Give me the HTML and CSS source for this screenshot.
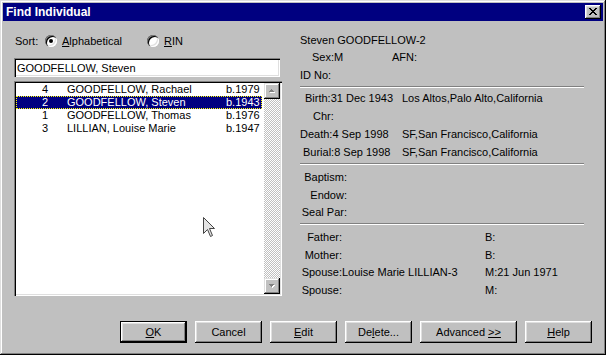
FILE: index.html
```html
<!DOCTYPE html>
<html lang="en">
<head>
    <meta charset="UTF-8">
    <title>Find Individual</title>
    <link rel="stylesheet" href="styles.css">
</head>
<body>
    <div class="window">
        <div class="titlebar">
            <span class="title">Find Individual</span>
            <div class="close-btn">
                <svg width="8" height="7" viewBox="0 0 8 7" shape-rendering="crispEdges">
                    <path fill="#000" d="M0 0h2v1H0z M6 0h2v1H6z M1 1h2v1H1z M5 1h2v1H5z M2 2h4v1H2z M3 3h2v1H3z M2 4h4v1H2z M1 5h2v1H1z M5 5h2v1H5z M0 6h2v1H0z M6 6h2v1H6z"/>
                </svg>
            </div>
        </div>

        <div class="main">
            <div class="search-col">
                <div class="sort-row">
                    <span class="sort-label">Sort:</span>
                    <div class="radio radio-first"><span class="radio-dot checked"></span><span><u>A</u>lphabetical</span></div>
                    <div class="radio"><span class="radio-dot"></span><span><u>R</u>IN</span></div>
                </div>

                <input class="name-input" type="text" value="GOODFELLOW, Steven">

                <div class="listbox">
                    <div class="list-rows">
                        <div class="list-row"><span class="num">4</span><span class="name">GOODFELLOW, Rachael</span><span class="year">b.1979</span></div>
                        <div class="list-row selected"><span class="num">2</span><span class="name">GOODFELLOW, Steven</span><span class="year">b.1943</span></div>
                        <div class="list-row"><span class="num">1</span><span class="name">GOODFELLOW, Thomas</span><span class="year">b.1976</span></div>
                        <div class="list-row"><span class="num">3</span><span class="name">LILLIAN, Louise Marie</span><span class="year">b.1947</span></div>
                    </div>
                    <div class="scrollbar">
                        <div class="scroll-btn">
                            <svg width="6" height="4" viewBox="0 0 6 4" shape-rendering="crispEdges">
                                <path fill="#fff" d="M3 1h1v1H3z M2 2h3v1H2z M1 3h5v1H1z"/>
                                <path fill="#808080" d="M2 0h1v1H2z M1 1h3v1H1z M0 2h5v1H0z"/>
                            </svg>
                        </div>
                        <div class="scroll-track"></div>
                        <div class="scroll-btn">
                            <svg width="6" height="4" viewBox="0 0 6 4" shape-rendering="crispEdges">
                                <path fill="#fff" d="M1 1h5v1H1z M2 2h3v1H2z M3 3h1v1H3z"/>
                                <path fill="#808080" d="M0 0h5v1H0z M1 1h3v1H1z M2 2h1v1H2z"/>
                            </svg>
                        </div>
                    </div>
                    <!-- mouse pointer left over the list -->
                    <svg class="pointer" width="13" height="21" viewBox="0 0 13 21">
                        <path d="M0.5 0.5 L0.5 16.5 L4.5 12.5 L7.5 19.5 L9.5 18.5 L6.5 11.5 L11.5 11.5 Z" fill="#e4e4e4" stroke="#444" stroke-width="1"/>
                    </svg>
                </div>
            </div>

            <div class="details">
                <div class="person-name">Steven GOODFELLOW-2</div>
                <div class="row">
                    <span class="sex">Sex:M</span>
                    <span>AFN:</span>
                </div>
                <div class="row">ID No:</div>

                <div class="sep sep-first"></div>

                <div class="row event">
                    <span class="when ind-birth">Birth:31 Dec 1943</span>
                    <span>Los Altos,Palo Alto,California</span>
                </div>
                <div class="row event">
                    <span class="when ind-chr">Chr:</span>
                    <span></span>
                </div>
                <div class="row event">
                    <span class="when">Death:4 Sep 1998</span>
                    <span>SF,San Francisco,California</span>
                </div>
                <div class="row event">
                    <span class="when ind-burial">Burial:8 Sep 1998</span>
                    <span>SF,San Francisco,California</span>
                </div>

                <div class="sep sep-second"></div>

                <div class="row ord"><span class="ord-label">Baptism:</span></div>
                <div class="row ord"><span class="ord-label">Endow:</span></div>
                <div class="row ord"><span class="ord-label">Seal Par:</span></div>

                <div class="sep sep-third"></div>

                <div class="row family">
                    <span><span class="fam-label">Father:</span></span>
                    <span>B:</span>
                </div>
                <div class="row family">
                    <span><span class="fam-label">Mother:</span></span>
                    <span>B:</span>
                </div>
                <div class="row family">
                    <span><span class="fam-label">Spouse:</span>Louise Marie LILLIAN-3</span>
                    <span>M:21 Jun 1971</span>
                </div>
                <div class="row family">
                    <span><span class="fam-label">Spouse:</span></span>
                    <span>M:</span>
                </div>
            </div>
        </div>

        <div class="buttons">
            <button class="btn btn-default"><u>O</u>K</button>
            <button class="btn">Cancel</button>
            <button class="btn"><u>E</u>dit</button>
            <button class="btn">De<u>l</u>ete...</button>
            <button class="btn btn-wide">Advanced <u>&gt;&gt;</u></button>
            <button class="btn"><u>H</u>elp</button>
        </div>
    </div>
</body>
</html>
```

FILE: styles.css
```css
body {
    margin: 0;
    background-color: #c0c0c0;
    font-family: "Liberation Sans", Arial, sans-serif;
    font-size: 11px;
    color: #000;
}
.window {
    width: 606px;
    height: 355px;
    box-sizing: border-box;
    padding: 3px;
    background: #c0c0c0;
    box-shadow: inset -1px -1px #000, inset 1px 1px #dfdfdf, inset -2px -2px #808080, inset 2px 2px #fff;
    display: flex;
    flex-direction: column;
}
.titlebar {
    height: 18px;
    background: #000080;
    color: #fff;
    display: flex;
    align-items: center;
    justify-content: space-between;
    padding-left: 3px;
}
.title {
    font-weight: bold;
    font-size: 12px;
}
.close-btn {
    width: 16px;
    height: 14px;
    margin-right: 2px;
    background: #c0c0c0;
    box-shadow: inset -1px -1px #000, inset 1px 1px #fff, inset -2px -2px #808080, inset 2px 2px #dfdfdf;
    display: flex;
    align-items: center;
    justify-content: center;
}
.close-btn svg {
    margin: 0 0 1px 0;
}

/* main area */
.main {
    display: flex;
    gap: 18px;
    height: 300px;
    box-sizing: border-box;
    padding: 12px 0 0 11px;
}
.search-col {
    width: 268px;
}
.sort-row {
    display: flex;
    align-items: center;
    height: 16px;
    padding-left: 1px;
}
.sort-label {
    width: 30px;
}
.radio {
    display: flex;
    align-items: center;
    gap: 5px;
}
.radio-first {
    width: 102px;
}
.radio-dot {
    width: 12px;
    height: 12px;
    border-radius: 50%;
    background: #fff;
    box-shadow: inset 1px 1px #808080, inset 2px 2px #000, inset -1px -1px #fff, inset -2px -2px #dfdfdf;
    display: flex;
    align-items: center;
    justify-content: center;
}
.radio-dot.checked::after {
    content: "";
    width: 4px;
    height: 4px;
    border-radius: 50%;
    background: #000;
}
.name-input {
    display: block;
    margin: 9px 0 0 0;
    width: 266px;
    height: 19px;
    box-sizing: border-box;
    border: none;
    padding: 0 3px;
    background: #fff;
    font-family: inherit;
    font-size: 11px;
    color: #000;
    box-shadow: inset 1px 1px #808080, inset 2px 2px #000, inset -1px -1px #fff, inset -2px -2px #dfdfdf;
}
.listbox {
    position: relative;
    margin-top: 4px;
    width: 268px;
    height: 215px;
    box-sizing: border-box;
    padding: 2px;
    display: flex;
    background: #fff;
    box-shadow: inset 1px 1px #808080, inset 2px 2px #000, inset -1px -1px #fff, inset -2px -2px #dfdfdf;
}
.list-rows {
    flex: 1;
}
.list-row {
    display: flex;
    height: 13px;
    line-height: 13px;
}
.list-row.selected {
    background: #000080;
    color: #fff;
    outline: 1px dotted #ffff00;
    outline-offset: -1px;
}
.num {
    width: 32px;
    text-align: right;
}
.name {
    width: 159px;
    padding-left: 19px;
}
.scrollbar {
    width: 16px;
    margin-left: 2px;
    display: flex;
    flex-direction: column;
}
.scroll-btn {
    width: 16px;
    height: 16px;
    background: #c0c0c0;
    box-shadow: inset -1px -1px #000, inset 1px 1px #dfdfdf, inset -2px -2px #808080, inset 2px 2px #fff;
    display: flex;
    align-items: center;
    justify-content: center;
}
.scroll-track {
    flex: 1;
    background: repeating-conic-gradient(#fff 0 25%, #c0c0c0 0 50%) 0 0 / 2px 2px;
}
.pointer {
    position: absolute;
    left: 189px;
    top: 136px;
}

/* details on the right */
.details {
    width: 284px;
}
.person-name {
    height: 15px;
    line-height: 15px;
}
.row {
    display: flex;
    height: 18px;
    line-height: 18px;
}
.sex {
    width: 80px;
    padding-left: 12px;
}
.sep {
    border-top: 1px solid #808080;
    border-bottom: 1px solid #fff;
}
.sep-first {
    margin: 2px 0 1px;
}
.sep-second {
    margin: 2px 0 4px;
}
.sep-third {
    margin: 1.5px 0 4px;
}
.event .when {
    width: 102px;
    box-sizing: border-box;
}
.ind-birth {
    padding-left: 5px;
}
.ind-chr {
    padding-left: 13px;
}
.ind-burial {
    padding-left: 3px;
}
.ord,
.family {
    height: 17.5px;
    line-height: 17.5px;
}
.ord-label {
    width: 47px;
    text-align: right;
}
.family > span:first-child {
    width: 185px;
}
.fam-label {
    display: inline-block;
    width: 42px;
    text-align: right;
}

/* dialog buttons */
.buttons {
    display: flex;
    justify-content: flex-end;
    gap: 8px;
    padding-right: 11px;
}
.btn {
    width: 67px;
    height: 22px;
    box-sizing: border-box;
    border: none;
    padding: 0;
    background: #c0c0c0;
    font-family: inherit;
    font-size: 11px;
    color: #000;
    box-shadow: inset -1px -1px #000, inset 1px 1px #fff, inset -2px -2px #808080, inset 2px 2px #dfdfdf;
}
.btn-default {
    border: 1px solid #000;
}
.btn-wide {
    width: 97px;
}
```
